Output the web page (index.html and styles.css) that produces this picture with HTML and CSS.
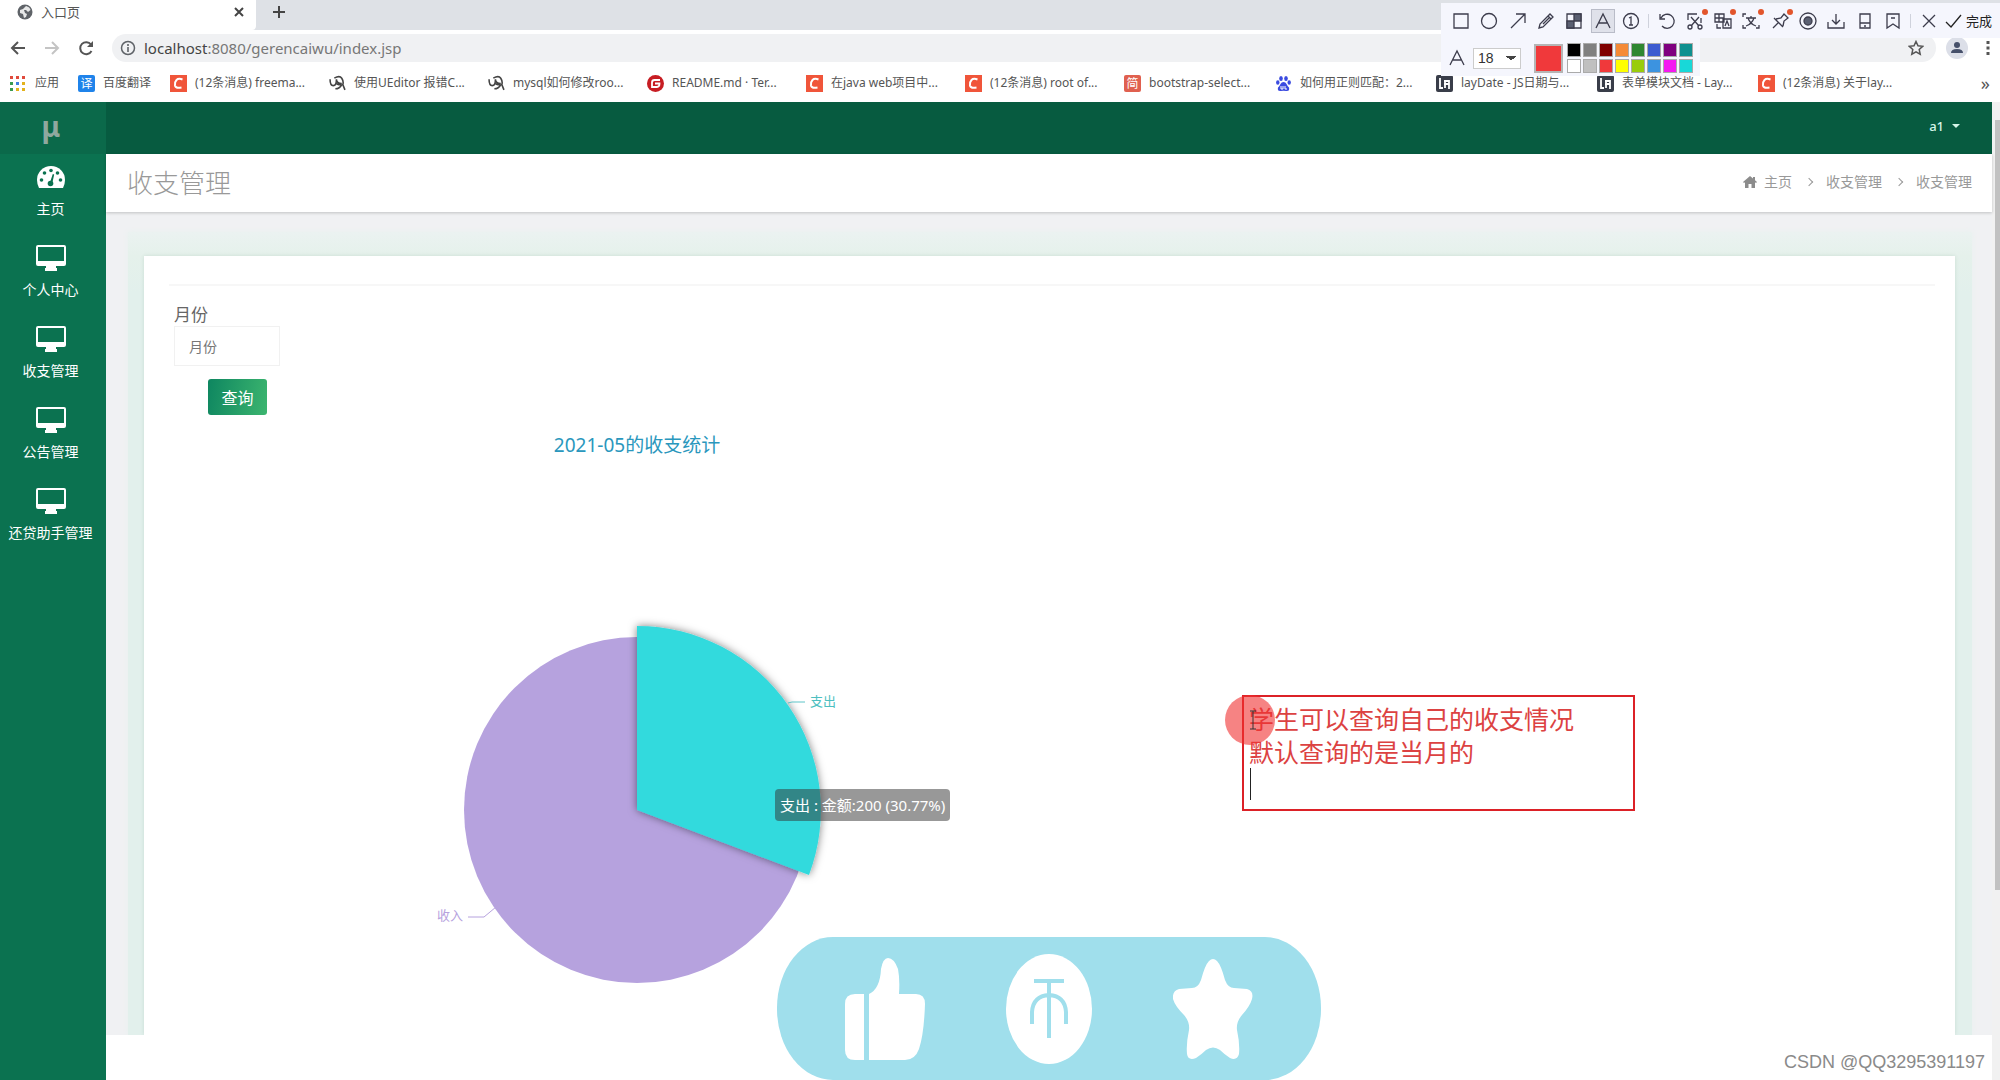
FILE: index.html
```html
<!DOCTYPE html>
<html lang="zh-CN">
<head>
<meta charset="utf-8">
<title>入口页</title>
<link rel="stylesheet" href="styles.css">
</head>
<body>
<svg class="defs" aria-hidden="true">
  <symbol id="monitor" viewBox="0 0 30 26"><path fill="currentColor" fill-rule="evenodd" d="M2 0h26q2 0 2 2v17q0 2-2 2h-8v2h1v3H9v-3h1v-2H2q-2 0-2-2V2q0-2 2-2zm0 2v14h26V2z"/></symbol>
  <symbol id="csdn" viewBox="0 0 17 17"><path fill="#f0553a" d="M0 0h17v17H0z"/><path d="M12.500 4.500q-4-1.500-6 .5t-1.500 5.500q.5 3 6.500 2" fill="none" stroke="#fff" stroke-width="2"/></symbol>
  <symbol id="ant" viewBox="0 0 16 16"><path d="M1 4q0 6 3 6t3-6M5 3q5-3 7 0t1 6l2 5M12 8q-3 2-5 0M7 4q0 4 5 4M6 13q4 0 6-4" fill="none" stroke="#444" stroke-width="1.500"/></symbol>
  <symbol id="layui" viewBox="0 0 17 17"><rect width="17" height="17" rx="2" fill="#393d49"/><path d="M4 3v10h3M8 6h5v8M8 9h5M9 6v7" fill="none" stroke="#fff" stroke-width="1.800"/></symbol>
</svg>

<header class="browser">
  <div class="tab-strip">
    <div class="tab">
      <svg class="tab-icon" viewBox="0 0 16 16"><circle cx="8" cy="8" r="7.500" fill="#5f6368"/><path d="M9 2q4 1 4.500 4L11 8 9 6 7 6l1 3 2 1-1 3-2 1-1-4-3-1 0-3 3-1z" fill="#fff" opacity=".85"/></svg>
      <span>入口页</span>
      <button class="plain tab-close" aria-label="关闭"><svg width="10" height="10" viewBox="0 0 10 10"><path d="M1 1l8 8M9 1L1 9" stroke="#444" stroke-width="2"/></svg></button>
    </div>
    <button class="plain new-tab" aria-label="新标签页"><svg width="14" height="14" viewBox="0 0 14 14"><path d="M7 1v12M1 7h12" stroke="#444" stroke-width="2"/></svg></button>
  </div>
  <div class="nav-bar">
    <button class="plain" aria-label="后退"><svg width="16" height="14" viewBox="0 0 16 14"><path d="M8 1L2 7l6 6M2 7h13" fill="none" stroke="#555" stroke-width="2"/></svg></button>
    <button class="plain" aria-label="前进"><svg width="16" height="14" viewBox="0 0 16 14"><path d="M8 1l6 6-6 6M14 7H1" fill="none" stroke="#c4c4c4" stroke-width="2"/></svg></button>
    <button class="plain" aria-label="刷新"><svg width="16" height="16" viewBox="0 0 16 16"><path d="M13.500 11A6 6 0 1 1 13 4.500" fill="none" stroke="#555" stroke-width="2"/><path d="M15 1v6H9z" fill="#555"/></svg></button>
    <label class="address">
      <svg width="16" height="16" viewBox="0 0 16 16"><circle cx="8" cy="8" r="6.500" fill="none" stroke="#5f6368" stroke-width="1.500"/><path d="M8 7v5M8 4v2" stroke="#5f6368" stroke-width="1.600"/></svg>
      <span class="url"><b>localhost</b>:8080/gerencaiwu/index.jsp</span>
      <svg class="fav" width="16" height="16" viewBox="0 0 16 16"><path d="M8 1.500l2 4.300 4.700.5-3.500 3.200 1 4.700L8 11.800l-4.200 2.400 1-4.700L1.300 6.300 6 5.800z" fill="none" stroke="#555" stroke-width="1.500"/></svg>
    </label>
    <button class="plain avatar" aria-label="用户"><svg width="22" height="22" viewBox="0 0 22 22"><circle cx="11" cy="11" r="11" fill="#dcdfe8"/><circle cx="11" cy="8" r="3" fill="#46506a"/><path d="M5 16q0-4 6-4t6 4z" fill="#46506a"/></svg></button>
    <button class="plain" aria-label="菜单"><svg width="4" height="16" viewBox="0 0 4 16"><path d="M.5 1h3v3h-3zM.5 6.500h3v3h-3zM.5 12h3v3h-3z" fill="#555"/></svg></button>
  </div>
  <nav class="bookmarks">
    <a href="#" class="bm apps"><svg width="15" height="15" viewBox="0 0 15 15"><path d="M0 0h3v3H0zM6 0h3v3H6zM12 0h3v3h-3z" fill="#e04a3c"/><path d="M0 6h3v3H0zM0 12h3v3H0z" fill="#3a9b50"/><path d="M6 6h3v3H6z" fill="#3f7fe0"/><path d="M12 6h3v3h-3zM6 12h3v3H6zM12 12h3v3h-3z" fill="#e3b21c"/></svg>应用</a>
    <a href="#" class="bm fanyi"><span class="badge blue">译</span>百度翻译</a>
    <a href="#" class="bm"><svg><use href="#csdn"/></svg>(12条消息) freema...</a>
    <a href="#" class="bm"><svg><use href="#ant"/></svg>使用UEditor 报错C...</a>
    <a href="#" class="bm"><svg><use href="#ant"/></svg>mysql如何修改roo...</a>
    <a href="#" class="bm"><svg viewBox="0 0 17 17"><circle cx="8.500" cy="8.500" r="8.500" fill="#c71d23"/><path d="M13 5H7.500Q5 5 5 7.500V12h5q2.500 0 2.500-3.500H8" fill="none" stroke="#fff" stroke-width="1.800"/></svg>README.md · Ter...</a>
    <a href="#" class="bm"><svg><use href="#csdn"/></svg>在java web项目中...</a>
    <a href="#" class="bm"><svg><use href="#csdn"/></svg>(12条消息) root of...</a>
    <a href="#" class="bm short"><span class="badge red">简</span>bootstrap-select...</a>
    <a href="#" class="bm wide"><svg viewBox="0 0 17 17" fill="#3b4be0"><ellipse cx="6" cy="3.500" rx="1.800" ry="2.500"/><ellipse cx="11" cy="3.500" rx="1.800" ry="2.500"/><ellipse cx="2.800" cy="7.500" rx="1.700" ry="2.200"/><ellipse cx="14.200" cy="7.500" rx="1.700" ry="2.200"/><path d="M8.500 7q2 0 3 2t2.500 3.500q1 4-3 3.500-2.500-.5-5 0-4 .5-3-3.500Q4.500 11 5.500 9t3-2z"/><path d="M6 11v3h2v-3M10 11v3h2" stroke="#fff" fill="none"/></svg>如何用正则匹配：2...</a>
    <a href="#" class="bm wide"><svg><use href="#layui"/></svg>layDate - JS日期与...</a>
    <a href="#" class="bm wide"><svg><use href="#layui"/></svg>表单模块文档 - Lay...</a>
    <a href="#" class="bm"><svg><use href="#csdn"/></svg>(12条消息) 关于lay...</a>
    <button class="plain more">»</button>
  </nav>
</header>

<div class="app">
  <aside class="sidebar">
    <div class="logo">μ</div>
    <nav class="menu">
      <a href="#"><svg class="gauge" viewBox="0 0 28 22"><path d="M2 22Q0 18 0 14a14 14 0 0 1 28 0q0 4-2 8z" fill="currentColor"/><g fill="#0b7250"><circle cx="4.500" cy="14" r="1.800"/><circle cx="7.500" cy="7" r="1.800"/><circle cx="14" cy="4.500" r="1.800"/><circle cx="20.500" cy="7" r="1.800"/><circle cx="23.500" cy="14" r="1.800"/><circle cx="13.500" cy="17.500" r="2.800"/><path d="M12.800 17l3-9 1.400.5-2 9z"/></g></svg>主页</a>
      <a href="#"><svg><use href="#monitor"/></svg>个人中心</a>
      <a href="#"><svg><use href="#monitor"/></svg>收支管理</a>
      <a href="#"><svg><use href="#monitor"/></svg>公告管理</a>
      <a href="#"><svg><use href="#monitor"/></svg>还贷助手管理</a>
    </nav>
  </aside>

  <div class="page">
    <header class="top-bar"><button class="plain user">a1 <i class="caret"></i></button></header>
    <div class="title-bar">
      <h1>收支管理</h1>
      <nav class="crumbs">
        <a href="#"><svg width="14" height="12" viewBox="0 0 14 12"><path d="M7 0l3 2.500V1h2v3.200L14 6l-1 1-1-.8V12H8.500V8h-3v4H2V6.200L1 7 0 6z" fill="#8c8c8c"/></svg>主页</a>
        <i class="sep"></i><a href="#">收支管理</a>
        <i class="sep"></i><a href="#">收支管理</a>
      </nav>
    </div>
    <main class="content">
      <div class="halo">
        <section class="panel">
          <hr>
          <form class="query" onsubmit="return false">
            <label for="month">月份</label>
            <input id="month" type="text" placeholder="月份">
            <button type="submit">查询</button>
          </form>
          <div class="chart">
            <svg width="936" height="620" viewBox="0 0 936 620">
              <defs><filter id="lift" x="-20%" y="-20%" width="140%" height="140%"><feDropShadow dx="0" dy="0" stdDeviation="4" flood-color="#000" flood-opacity=".5"/></filter></defs>
              <text class="chart-title" x="468" y="37" text-anchor="middle">2021-05的收支统计</text>
              <circle cx="468" cy="395" r="173" fill="#b6a2de"/>
              <path d="M468 395V211A184 184 0 0 1 640 460z" fill="#33dadd" filter="url(#lift)"/>
              <path d="M619 288l4-1h13" fill="none" stroke="#5fc4c8"/>
              <path d="M327 492l-12 10h-16" fill="none" stroke="#b6a2de"/>
              <text class="out" x="641" y="291">支出</text>
              <text class="in" x="268" y="505">收入</text>
            </svg>
            <div class="tooltip">支出 : 金额:200 (30.77%)</div>
          </div>
        </section>
      </div>
    </main>
  </div>
  <div class="scrollbar"><div class="thumb"></div></div>
</div>

<div class="capture">
  <div class="tools">
    <button class="plain" aria-label="矩形"><svg viewBox="0 0 20 20"><path d="M3 3h14v14H3z"/></svg></button>
    <button class="plain" aria-label="椭圆"><svg viewBox="0 0 20 20"><circle cx="10" cy="10" r="7.500"/></svg></button>
    <button class="plain" aria-label="箭头"><svg viewBox="0 0 20 20"><path d="M3 17L17 3M8 3h9v9"/></svg></button>
    <button class="plain" aria-label="画笔"><svg viewBox="0 0 20 20"><path d="M3 17l1-4L14 3l3 3L7 16zM12 5l3 3M7 13l6-6"/></svg></button>
    <button class="plain" aria-label="马赛克"><svg viewBox="0 0 20 20"><path d="M3 3h14v14H3z"/><path class="solid" d="M3 10h7v7H3zM10 3h7v7h-7z"/></svg></button>
    <button class="plain active" aria-label="文字"><svg viewBox="0 0 20 20"><path d="M3 17L10 3l7 14M6 12h8"/></svg></button>
    <button class="plain" aria-label="序号"><svg viewBox="0 0 20 20"><circle cx="10" cy="10" r="7.500"/><path d="M8 7l2-1v8M8 14h4"/></svg></button>
    <i class="bar"></i>
    <button class="plain" aria-label="撤销"><svg viewBox="0 0 20 20"><path d="M3 3v5h5M4 7a7 7 0 1 1 1 8"/></svg></button>
    <button class="plain dot" aria-label="裁剪"><svg viewBox="0 0 20 20"><path d="M3 9V3h9M16 7v5M6 6l8 9M14 6l-8 9"/><circle cx="5" cy="16" r="2"/><circle cx="15" cy="16" r="2"/></svg></button>
    <button class="plain dot" aria-label="翻译"><svg viewBox="0 0 20 20"><path d="M2 3h9v8H2zM2 7h9M6 3v8M10 8h8v9h-8zM12 15l2-5 2 5M4 13v4h4"/></svg></button>
    <button class="plain dot" aria-label="识字"><svg viewBox="0 0 20 20"><path d="M2 6V3h3M2 14v3h3M18 14v3h-3M5 7h10M10 5v2M13 7q-2 6-8 8M7 7q2 6 8 8"/></svg></button>
    <button class="plain dot" aria-label="贴图"><svg viewBox="0 0 20 20"><path d="M4 7l9 9M6 8l5-1 3-4 4 4-4 3-1 5M8 12l-5 5"/></svg></button>
    <button class="plain" aria-label="录屏"><svg viewBox="0 0 20 20"><circle cx="10" cy="10" r="8"/><circle class="solid" cx="10" cy="10" r="4"/></svg></button>
    <button class="plain" aria-label="下载"><svg viewBox="0 0 20 20"><path d="M10 3v10M6 9l4 4 4-4M2 11v6h16v-6"/></svg></button>
    <button class="plain" aria-label="手机"><svg viewBox="0 0 20 20"><path d="M5 3h10v14H5zM5 12h10M9 15h2"/></svg></button>
    <button class="plain" aria-label="收藏"><svg viewBox="0 0 20 20"><path d="M4 3h12v14l-6-4-6 4zM8 7h4"/></svg></button>
    <i class="bar"></i>
    <button class="plain" aria-label="取消"><svg viewBox="0 0 20 20"><path d="M4 4l12 12M16 4L4 16"/></svg></button>
    <button class="plain done"><svg viewBox="0 0 20 20"><path d="M3 11l5 5L18 4"/></svg>完成</button>
  </div>
  <div class="style-row">
    <svg class="letter" viewBox="0 0 20 20"><path d="M3 17L10 3l7 14M6 12h8"/></svg>
    <select aria-label="字号"><option>18</option></select>
    <span class="current"></span>
    <div class="palette">
      <i style="background:#000"></i><i style="background:#808080"></i><i style="background:#7f0000"></i><i style="background:#f58a36"></i><i style="background:#2f8731"></i><i style="background:#3d5bd0"></i><i style="background:#7f007f"></i><i style="background:#0f9090"></i>
      <i style="background:#fff"></i><i style="background:#c0c0c0"></i><i style="background:#f0393b"></i><i style="background:#ffff00"></i><i style="background:#99cc0c"></i><i style="background:#3c93e0"></i><i style="background:#f518f0"></i><i style="background:#18d8d8"></i>
    </div>
  </div>
</div>

<textarea class="note" aria-label="批注" spellcheck="false">学生可以查询自己的收支情况
默认查询的是当月的
</textarea>
<div class="note-caret"></div>
<div class="click-spot"><svg width="8" height="20" viewBox="0 0 8 20"><path d="M1 1h6M1 19h6M4 1v18" stroke="#333" fill="none"/></svg></div>

<div class="reactions">
  <button class="plain" aria-label="点赞"><svg width="80" height="102" viewBox="0 0 80 102"><path fill="#fff" d="M10 36h9v66h-9Q0 102 0 92V46Q0 36 10 36zM24 36q11-5 12-25Q38 0 43 0q6 0 10 11 2 10 1 25h17q9 0 9 10-1 30-6 45-4 11-14 11H24z"/></svg></button>
  <button class="plain" aria-label="投币"><svg width="86" height="110" viewBox="0 0 86 110"><ellipse cx="43" cy="55" rx="43" ry="55" fill="#fff"/><path d="M28 27h30M43 27v57M26 70V58q1-16 17-17 16 1 17 17v12" fill="none" stroke="#a0dfec" stroke-width="4"/></svg></button>
  <button class="plain" aria-label="收藏"><svg width="80" height="100" viewBox="0 0 80 100"><path fill="#fff" d="M36 2q4-4 8 0 4 4 8 19 3 8 9 8l13 1q7 2 5 10-2 7-10 16-6 7-5 15 3 14 2 24-2 7-9 4-6-4-10-8-7-5-14 0-4 4-10 8-8 3-9-4-1-10 2-24 1-8-5-15Q2 47 0 40q-1-8 6-10l13-1q6 0 9-8 4-15 8-19z"/></svg></button>
</div>
<div class="watermark">CSDN @QQ3295391197</div>
</body>
</html>
```
FILE: styles.css
```css
* { box-sizing: border-box; }
body {
  margin: 0;
  position: relative;
  min-height: 100vh;
  display: flex;
  flex-direction: column;
  overflow: hidden;
  background: #fff;
  color: #555;
  font: 14px/20px "Noto Sans", "Noto Sans CJK SC", sans-serif;
}
a { color: inherit; text-decoration: none; }
svg { display: block; flex: none; }
.defs { position: absolute; width: 0; height: 0; }
.plain { border: 0; padding: 0; margin: 0; background: none; font: inherit; color: inherit; display: flex; align-items: center; justify-content: center; }

/* Browser frame */
.tab-strip { height: 30px; display: flex; align-items: center; background: #dee1e6; }
.tab { width: 256px; height: 30px; padding: 0 12px 6px 17px; display: flex; align-items: center; gap: 8px; background: #fff; border-radius: 0 0 4px 0; font-size: 13px; }
.tab-icon { width: 16px; height: 16px; }
.tab-close { margin-left: auto; }
.new-tab { padding: 0 16px 6px; }
.nav-bar { height: 36px; padding: 0 10px; display: flex; align-items: center; gap: 18px; }
.address { flex: 1; height: 28px; padding: 0 12px 0 8px; display: flex; align-items: center; gap: 8px; border-radius: 14px; background: #f0f1f3; }
.url { color: #777; font-size: 15px; }
.url b { color: #444; font-weight: 400; }
.fav { margin-left: auto; }
.avatar { margin-left: -8px; }
.bookmarks { height: 36px; padding: 0 10px 2px; display: flex; align-items: center; font-size: 12px; color: #555; }
.bm { width: 159px; flex: none; display: flex; align-items: center; gap: 8px; white-space: nowrap; }
.bm svg { width: 17px; height: 17px; }
.bm.apps { width: 68px; gap: 10px; }
.bm.apps svg { width: 15px; height: 15px; }
.bm.fanyi { width: 92px; }
.bm.short { width: 151px; }
.bm.wide { width: 161px; }
.badge { width: 17px; height: 17px; border-radius: 2px; color: #fff; line-height: 17px; text-align: center; }
.blue { background: #1f83ea; }
.red { background: #e0604f; }
.more { margin-left: auto; font-size: 18px; }

/* Application */
.app { flex: 1; display: flex; }
.sidebar { width: 106px; flex: none; background: #0b7250; color: #fff; }
.logo { height: 52px; padding-right: 4px; background: #0b694a; color: #8fa89f; font: 700 28px/48px "Noto Sans", sans-serif; text-align: center; }
.menu { display: flex; flex-direction: column; padding-right: 5px; }
.menu a { height: 81px; padding-top: 10px; display: flex; flex-direction: column; align-items: center; gap: 9px; white-space: nowrap; }
.menu svg { width: 30px; height: 26px; }
.menu .gauge { width: 28px; }
.page { flex: 1; min-width: 0; background: #fff; }
.top-bar { height: 52px; padding: 0 32px 4px 0; display: flex; align-items: center; justify-content: flex-end; background: #075b40; color: #d6f5e8; }
.user { gap: 8px; font-size: 13px; font-weight: 500; }
.caret { border: 4px solid transparent; border-top-color: #d6f5e8; border-bottom: 0; }
.title-bar { height: 58px; padding: 0 20px 2px 21px; display: flex; align-items: center; justify-content: space-between; position: relative; box-shadow: 0 1px 3px rgba(0, 0, 0, .2); }
h1 { margin: 0; color: #999; font-size: 26px; line-height: 36px; font-weight: 300; font-family: "Noto Sans CJK SC", sans-serif; }
.crumbs { display: flex; align-items: center; gap: 16px; color: #999; }
.crumbs a { display: flex; align-items: center; gap: 7px; }
.sep { width: 6px; height: 6px; border: solid #999; border-width: 1px 1px 0 0; transform: rotate(45deg); margin: 0 -2px 0 -2px; }
.content { padding: 20px 20px 0 22px; background: #f0f1f3; overflow: hidden; }
.halo { padding: 24px 17px 0 16px; background: linear-gradient(#ebf2f1, #e5f1eb 24px, #e2f0ec 60px); box-shadow: 0 0 6px #e8f1ef; }
.panel { padding: 28px 20px 0 25px; background: #fff; box-shadow: 0 0 4px rgba(0, 80, 50, .12); }
hr { margin: 0; border: 0; border-top: 2px solid #f7f7f7; }
.query { padding: 18px 0 0 5px; display: flex; flex-direction: column; align-items: flex-start; }
.query label { font-size: 17px; line-height: 22px; color: #666; }
.query input { width: 106px; height: 40px; padding: 0 14px; border: 1px solid #f1f1f1; background: #fff; color: #666; font: inherit; }
.query input::placeholder { color: #777; }
.query button { width: 59px; height: 36px; margin: 13px 0 0 34px; padding: 0; border: 0; border-radius: 3px; background: linear-gradient(100deg, #0e8660, #3cb56f); color: #fff; font: 16px/36px "Noto Sans CJK SC", sans-serif; }
.chart { position: relative; width: 936px; }
.chart text { font-size: 13px; }
.chart .chart-title { font-size: 19px; fill: #2a97bd; }
.out { fill: #4dbfc0; }
.in { fill: #b6a2de; }
.tooltip { position: absolute; left: 606px; top: 374px; height: 32px; padding: 0 5px; border-radius: 4px; background: rgba(50, 50, 50, .5); color: #fff; font-size: 15px; line-height: 32px; white-space: nowrap; }
.scrollbar { width: 8px; flex: none; padding: 18px 0 0 3px; background: #f1f1f1; }
.thumb { height: 770px; background: #c1c1c1; }

/* Screenshot tool */
.capture { position: absolute; top: 3px; right: 0; width: 559px; color: #3c3c4c; }
.tools { height: 35px; padding: 0 8px 0 6px; display: flex; align-items: center; justify-content: space-between; background: #f5f6fd; }
.tools .plain { width: 28px; height: 24px; flex: none; position: relative; }
.tools svg, .letter { width: 20px; height: 20px; fill: none; stroke: currentColor; stroke-width: 1.3px; }
.tools .solid { fill: #5b6072; }
.tools .active { width: 24px; margin: 0 2px; border: 1px solid #b9bcc8; background: #dfe1ea; }
.dot::after { content: ""; position: absolute; top: 0; right: 1px; width: 6px; height: 6px; border-radius: 50%; background: #e2552c; }
.bar { width: 1px; height: 14px; margin: 0 3px; background: #cfd2dc; }
.tools .done { width: auto; gap: 3px; color: #222; font-size: 13px; }
.style-row { width: 259px; height: 38px; padding: 2px 0 0 6px; display: flex; align-items: center; background: #f5f6fd; }
.style-row select { width: 48px; height: 21px; margin: 0 13px 0 6px; padding: 0 4px; appearance: none; border: 1px solid #ccc; border-radius: 0; color: #333; font: 14px/18px "Liberation Sans", sans-serif; background: linear-gradient(to bottom left, #444 50%, transparent 50%) 32px 7px / 5px 5px no-repeat, linear-gradient(to bottom right, #444 50%, transparent 50%) 37px 7px / 5px 5px no-repeat, #fff; }
.current { width: 29px; height: 29px; margin-right: 4px; border: 2px solid #b5b5b5; background: #f0393b; }
.palette { display: grid; grid-template-columns: repeat(8, 14px); grid-auto-rows: 14px; gap: 2px; }
.palette i { border: 1px solid #aaa; }

/* Annotation */
.note { position: absolute; left: 1242px; top: 695px; width: 393px; height: 116px; padding: 5px; border: 2px solid #dc2127; outline: 0; resize: none; overflow: hidden; background: none; color: #dc4242; font: 25px/33px "Noto Sans CJK SC", sans-serif; }
.note-caret { position: absolute; left: 1250px; top: 768px; width: 1px; height: 32px; background: #222; }
.click-spot { position: absolute; left: 1225px; top: 695px; width: 50px; height: 50px; padding: 15px 0 0 24px; border-radius: 50%; background: rgba(240, 48, 48, .6); }

.reactions { position: absolute; left: 777px; bottom: 0; width: 544px; height: 143px; padding: 0 68px; display: flex; align-items: center; justify-content: space-between; border-radius: 56px / 71px; background: #a0dfec; }
.watermark { position: absolute; right: 15px; bottom: 6px; color: #8a8a8a; font: 18px/24px "Liberation Sans", sans-serif; }
```
